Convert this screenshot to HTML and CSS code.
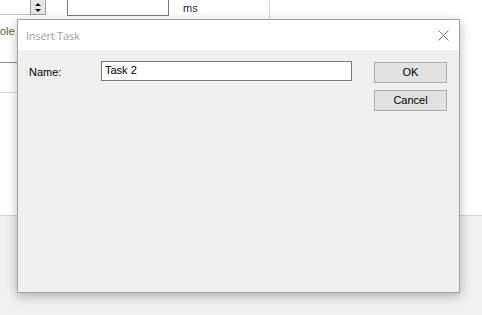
FILE: index.html
```html
<!DOCTYPE html>
<html>
<head>
<meta charset="utf-8">
<link rel="stylesheet" href="styles.css">
</head>
<body>
<div class="backdrop">
  <div class="panel">
    <div class="row-top">
      <div class="lead-line"></div>
      <div class="spin">
        <span class="arrow up"></span>
        <span class="arrow down"></span>
      </div>
      <div class="field"></div>
      <div class="unit">ms</div>
      <div class="divider"></div>
    </div>
    <div class="row-label">ole b</div>
    <div class="rule dark"></div>
    <div class="rule light"></div>
  </div>
  <div class="footer"></div>
</div>

<div class="dialog">
  <div class="titlebar">
    <span class="title">Insert Task</span>
    <svg class="close" width="11" height="11" viewBox="0 0 11 11">
      <path d="M0.5 0.5 L10.5 10.5 M10.5 0.5 L0.5 10.5" stroke="#7a7a7a" stroke-width="1" fill="none"/>
    </svg>
  </div>
  <div class="body">
    <div class="form">
      <label class="label">Name:</label>
      <div class="input">Task 2</div>
    </div>
    <div class="buttons">
      <div class="btn">OK</div>
      <div class="btn">Cancel</div>
    </div>
  </div>
</div>
</body>
</html>
```
FILE: styles.css
```css
html, body {
  margin: 0;
  padding: 0;
  width: 482px;
  height: 315px;
  overflow: hidden;
  background: #ffffff;
  font-family: "Liberation Sans", Arial, sans-serif;
}

.backdrop {
  display: flex;
  flex-direction: column;
  height: 315px;
}

.panel {
  height: 215px;
  background: #ffffff;
  display: flex;
  flex-direction: column;
}

.row-top {
  display: flex;
  height: 16px;
}

.lead-line {
  width: 30px;
  height: 15px;
  box-sizing: border-box;
  border-bottom: 1px solid #c8c8c8;
}

.spin {
  width: 16px;
  height: 15px;
  background: #e6e6e6;
  border: 1px solid #a0a0a0;
  border-top: none;
  box-sizing: border-box;
  display: flex;
  flex-direction: column;
  align-items: center;
  justify-content: space-around;
  padding: 1px 0;
}

.arrow {
  width: 0;
  height: 0;
  border-left: 3px solid transparent;
  border-right: 3px solid transparent;
}
.arrow.up { border-bottom: 3px solid #111; }
.arrow.down { border-top: 3px solid #111; }

.field {
  margin-left: 21px;
  width: 102px;
  height: 16px;
  box-sizing: border-box;
  border: 1px solid #7a7a7a;
  border-top: none;
}

.unit {
  margin-left: 14px;
  font-size: 11px;
  color: #1e2a4a;
  line-height: 13px;
  padding-top: 2px;
  width: 86px;
}

.divider {
  width: 1px;
  height: 19px;
  background: #dcdcdc;
}

.row-label {
  margin-top: 9px;
  height: 13px;
  width: 17px;
  overflow: hidden;
  font-size: 11px;
  line-height: 13px;
  color: #6a5d2f;
  white-space: nowrap;
}

.rule {
  width: 17px;
  height: 1px;
}
.rule.dark {
  margin-top: 24px;
  background: #8a8a8a;
}
.rule.light {
  margin-top: 29px;
  background: #dcdcdc;
}

.footer {
  flex: 1;
  background: #f0f0f0;
  border-top: 1px solid #d6d6d6;
}

.dialog {
  position: absolute;
  left: 17px;
  top: 19px;
  width: 443px;
  height: 274px;
  box-sizing: border-box;
  border: 1px solid #a3a3a3;
  background: #efefef;
  box-shadow: 0 3px 10px rgba(0, 0, 0, 0.28);
  display: flex;
  flex-direction: column;
}

.titlebar {
  height: 30px;
  background: #ffffff;
  display: flex;
  align-items: center;
  justify-content: space-between;
  padding: 0 10px 0 8px;
}

.title {
  font-family: "Open Sans", "Noto Sans", sans-serif;
  font-size: 11px;
  color: #a0a0a0;
  letter-spacing: -0.2px;
}

.close {
  display: block;
}

.body {
  flex: 1;
  display: flex;
  padding: 11px 11px 0 11px;
  gap: 22px;
}

.form {
  display: flex;
  align-items: flex-start;
}

.label {
  width: 72px;
  font-size: 11px;
  color: #000;
  line-height: 20px;
  padding-top: 1px;
}

.input {
  width: 251px;
  height: 20px;
  box-sizing: border-box;
  border: 1px solid #7a7a7a;
  background: #ffffff;
  font-size: 11px;
  line-height: 17px;
  padding-left: 3px;
  color: #000;
}

.buttons {
  display: flex;
  flex-direction: column;
  gap: 7px;
  padding-top: 1px;
}

.btn {
  width: 73px;
  height: 21px;
  box-sizing: border-box;
  border: 1px solid #adadad;
  background: #e1e1e1;
  font-size: 11px;
  line-height: 19px;
  text-align: center;
  color: #000;
}
```
